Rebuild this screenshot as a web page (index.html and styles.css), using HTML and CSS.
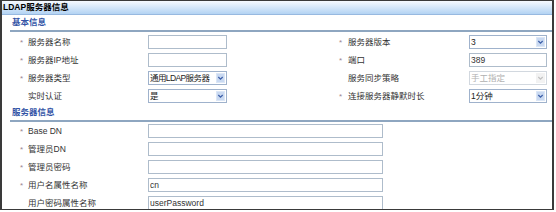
FILE: index.html
```html
<!DOCTYPE html>
<html lang="zh-CN">
<head>
<meta charset="utf-8">
<title>LDAP服务器信息</title>
<link rel="stylesheet" href="styles.css">
</head>
<body>
<div class="panel">
  <div class="titlebar">LDAP服务器信息</div>

  <div class="section-head">基本信息</div>
  <div class="form form-basic">
    <span class="star">*</span><span class="label">服务器名称</span><input class="field" type="text" value="">
    <span class="spacer"></span>
    <span class="star">*</span><span class="label">服务器版本</span>
    <div class="select"><span class="val">3</span><span class="arrow"><svg viewBox="0 0 8 8" width="8" height="8"><path d="M1.5 2.8 L4 5.3 L6.5 2.8" /></svg></span></div>

    <span class="star">*</span><span class="label">服务器IP地址</span><input class="field" type="text" value="">
    <span class="spacer"></span>
    <span class="star">*</span><span class="label">端口</span><input class="field" type="text" value="389">

    <span class="star">*</span><span class="label">服务器类型</span>
    <div class="select"><span class="val tight">通用LDAP服务器</span><span class="arrow"><svg viewBox="0 0 8 8" width="8" height="8"><path d="M1.5 2.8 L4 5.3 L6.5 2.8" /></svg></span></div>
    <span class="spacer"></span>
    <span class="star"></span><span class="label">服务同步策略</span>
    <div class="select disabled"><span class="val">手工指定</span><span class="arrow"><svg viewBox="0 0 8 8" width="8" height="8"><path d="M1.5 2.8 L4 5.3 L6.5 2.8" /></svg></span></div>

    <span class="star"></span><span class="label">实时认证</span>
    <div class="select"><span class="val">是</span><span class="arrow"><svg viewBox="0 0 8 8" width="8" height="8"><path d="M1.5 2.8 L4 5.3 L6.5 2.8" /></svg></span></div>
    <span class="spacer"></span>
    <span class="star">*</span><span class="label">连接服务器静默时长</span>
    <div class="select"><span class="val">1分钟</span><span class="arrow"><svg viewBox="0 0 8 8" width="8" height="8"><path d="M1.5 2.8 L4 5.3 L6.5 2.8" /></svg></span></div>
  </div>

  <div class="section-head">服务器信息</div>
  <div class="form form-server">
    <span class="star">*</span><span class="label">Base DN</span><input class="field wide" type="text" value="">
    <span class="star">*</span><span class="label">管理员DN</span><input class="field wide" type="text" value="">
    <span class="star">*</span><span class="label">管理员密码</span><input class="field wide" type="text" value="">
    <span class="star">*</span><span class="label">用户名属性名称</span><input class="field wide" type="text" value="cn">
    <span class="star"></span><span class="label">用户密码属性名称</span><input class="field wide" type="text" value="userPassword">
  </div>
</div>
</body>
</html>
```

FILE: styles.css
```css
html, body {
  margin: 0;
  padding: 0;
  background: #ffffff;
}

body {
  font-family: "Liberation Sans", "Noto Sans CJK SC", sans-serif;
  font-size: 8.5px;
  color: #333333;
}

.panel {
  position: relative;
  width: 550px;
  height: 208px;
  border-top: 1px solid #3a3a3a;
  border-left: 2px solid #3a3a3a;
  border-right: 2px solid #3a3a3a;
  border-bottom: 1px solid #3a3a3a;
  overflow: hidden;
  background: #ffffff;
}

.titlebar {
  height: 13px;
  line-height: 13px;
  padding-left: 1px;
  font-weight: bold;
  color: #000000;
  font-size: 8.5px;
  background: linear-gradient(#f6faff, #b3d3f3);
  border-bottom: 1px solid #97b9e0;
}

.section-head {
  margin-left: 8px;
  height: 15px;
  line-height: 15px;
  padding-left: 2px;
  font-weight: bold;
  color: #3354a6;
  border-bottom: 2px solid #8ea6c0;
}

.form {
  display: grid;
  grid-auto-rows: 18px;
  align-items: center;
  padding-left: 18px;
  padding-top: 1px;
}

.form-basic {
  grid-template-columns: 8px 120px 79px 112px 9px 121px 78px;
}

.form-server {
  grid-template-columns: 8px 120px 235px;
  padding-top: 0;
}

.star {
  color: #9a8890;
  font-size: 8px;
  line-height: 12px;
  align-self: start;
  padding-top: 4px;
}

.label {
  line-height: 14px;
  white-space: nowrap;
  color: #333333;
}

.field {
  box-sizing: border-box;
  width: 100%;
  height: 14px;
  margin: 0;
  padding: 0 1px;
  border: 1px solid #aebccb;
  font-family: "Liberation Sans", "Noto Sans CJK SC", sans-serif;
  font-size: 8.5px;
  color: #333333;
  background: #ffffff;
  outline: none;
}

.select {
  box-sizing: border-box;
  height: 14px;
  border: 1px solid #9fb2cc;
  display: flex;
  align-items: center;
  justify-content: space-between;
  padding-left: 1px;
  padding-right: 1px;
  background: #ffffff;
}

.select .val {
  line-height: 12px;
  white-space: nowrap;
  color: #222222;
}

.select .val.tight {
  letter-spacing: -0.6px;
}

.select .arrow {
  width: 9px;
  height: 10px;
  background: #c9d9f1;
  border: 1px solid #dbe6f6;
  box-sizing: border-box;
  display: flex;
  align-items: center;
  justify-content: center;
}

.select .arrow svg path {
  fill: none;
  stroke: #3b5ea8;
  stroke-width: 1.4;
}

.select.disabled {
  border-color: #d2d8df;
}

.select.disabled .val {
  color: #b0b0b0;
}

.select.disabled .arrow {
  background: #f2f2f2;
  border-color: #f2f2f2;
}

.select.disabled .arrow svg path {
  stroke: #c0c0c0;
}
```
